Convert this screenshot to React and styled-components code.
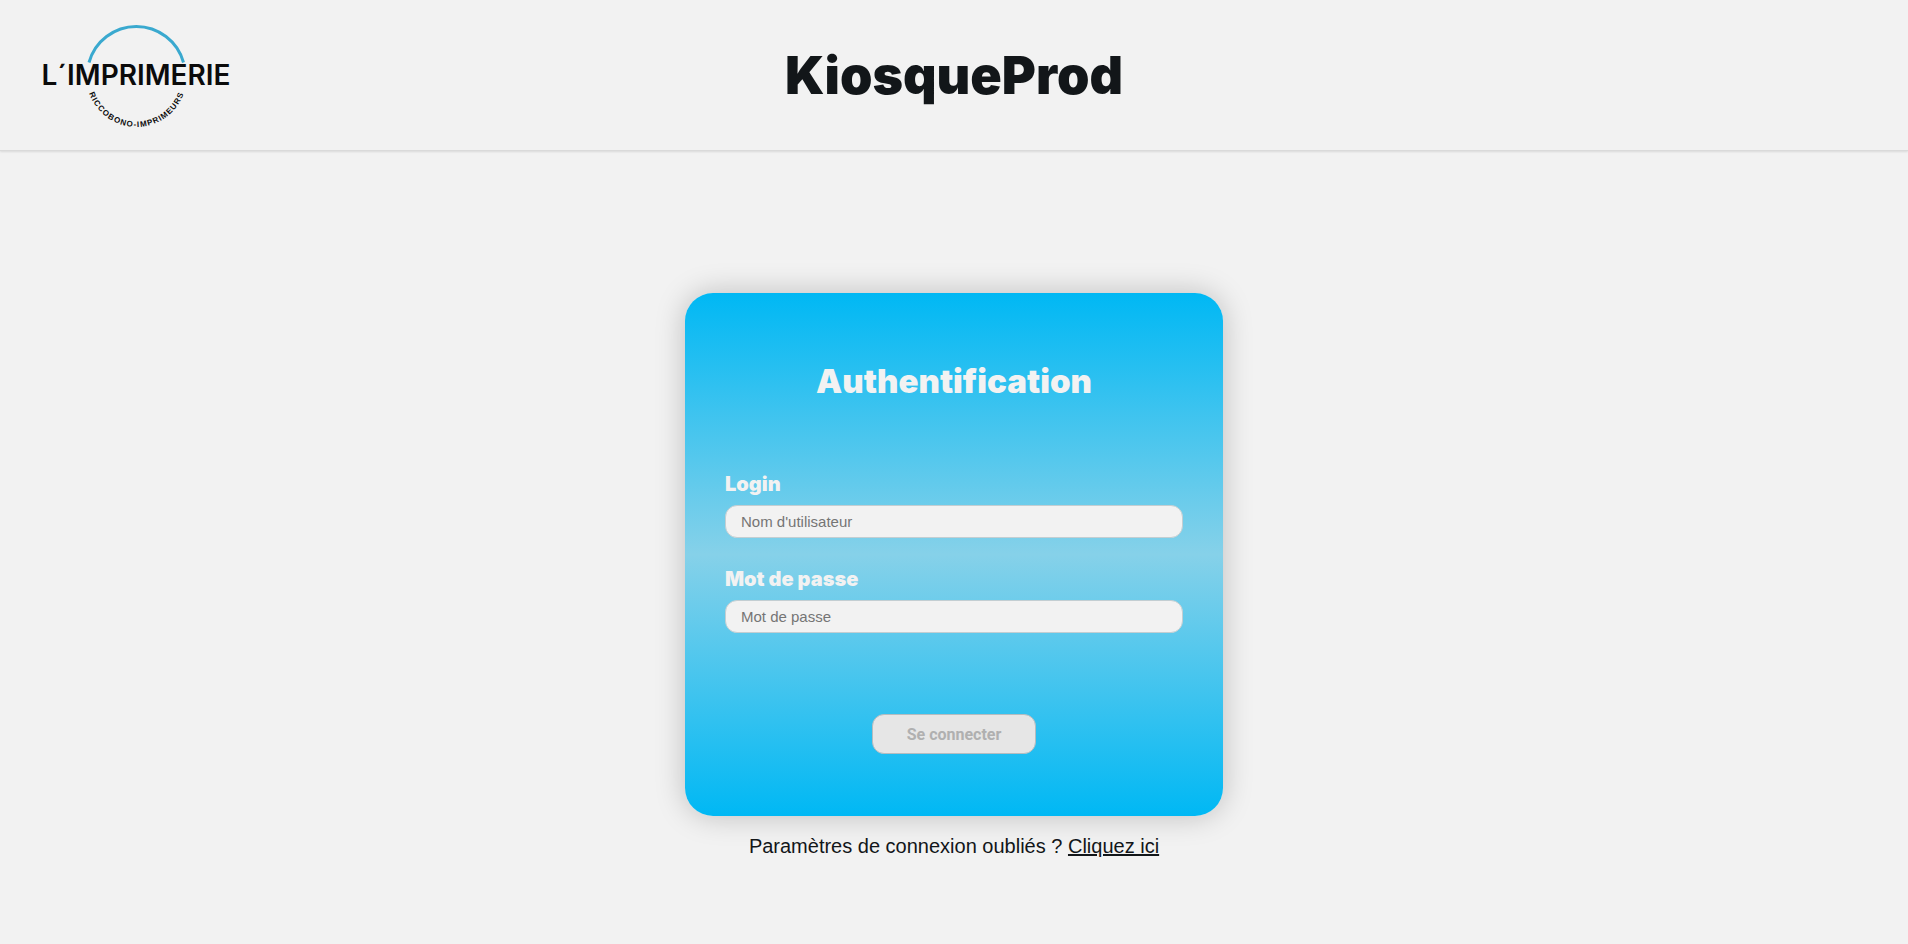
import React, { useState } from "react";
import styled, { createGlobalStyle } from "styled-components";

const GlobalStyle = createGlobalStyle`
  *, *::before, *::after { box-sizing: border-box; }
  body {
    margin: 0;
    background: #f2f2f2;
    color: #121619;
    font-family: "Liberation Sans", Arial, sans-serif;
  }
`;

const Header = styled.header`
  display: grid;
  grid-template-columns: 1fr auto 1fr;
  align-items: center;
  height: 151px;
  padding: 2px 40px 0;
  border-bottom: 1px solid #dadada;
  box-shadow: 0 1px 2px rgba(0, 0, 0, 0.1);
`;

const LogoLink = styled.a`
  justify-self: start;
  display: block;
  line-height: 0;
`;

const SiteTitle = styled.h1`
  margin: 0;
  font-family: "Arial Black", Inter, sans-serif;
  font-size: 52px;
  line-height: 60px;
  font-weight: 900;
`;

const Main = styled.main`
  display: flex;
  flex-direction: column;
  align-items: center;
  gap: 18px;
  padding: 142px 16px 72px;
`;

const Card = styled.form`
  display: flex;
  flex-direction: column;
  width: 100%;
  max-width: 538px;
  padding: 68px 40px 62px;
  border-radius: 28px;
  background: linear-gradient(#00b8f4, #86d1e9 50%, #00b8f4);
  box-shadow: 0 0 30px rgba(0, 0, 0, 0.22);
`;

const CardTitle = styled.h2`
  margin: 0 0 71px;
  color: #f2f2f2;
  font-family: "Arial Black", Inter, sans-serif;
  font-size: 33px;
  line-height: 40px;
  font-weight: 900;
  text-align: center;
`;

const Fields = styled.div`
  display: flex;
  flex-direction: column;
  gap: 29px;
  margin-bottom: 81px;
`;

const Field = styled.div`
  display: flex;
  flex-direction: column;
  gap: 9px;
`;

const Label = styled.label`
  align-self: flex-start;
  color: #f2f2f2;
  font-family: "Arial Black", Inter, sans-serif;
  font-size: 20px;
  line-height: 24px;
  font-weight: 900;
`;

const TextInput = styled.input`
  width: 100%;
  height: 33px;
  padding: 0 15px;
  border: 1px solid #c3ced2;
  border-radius: 12px;
  background: #f2f2f2;
  color: #121619;
  font-family: inherit;
  font-size: 15px;

  &::placeholder { color: #757575; }
`;

const SubmitButton = styled.button`
  align-self: center;
  height: 40px;
  padding: 0 34px;
  border: 1px solid #b4bcc0;
  border-radius: 12px;
  background: #e6e6e6;
  color: #121619;
  font-family: Roboto, sans-serif;
  font-size: 16px;
  font-weight: 700;

  &:disabled { color: #b0b0b0; }
`;

const Help = styled.p`
  margin: 0;
  font-size: 20px;
  line-height: 24px;
`;

const HelpLink = styled.a`
  color: inherit;
  text-decoration: underline;
`;

const LogoName = styled.text`
  font-family: Inter, sans-serif;
  font-size: 28px;
  font-weight: 600;
`;

const LogoTagline = styled.text`
  font-family: "Liberation Sans", Arial, sans-serif;
  font-size: 8px;
  font-weight: 700;
  letter-spacing: 1px;
`;

function Logo() {
  return (
    <svg width="194" height="106" viewBox="0 0 194 106" role="img" aria-label="L´Imprimerie Riccobono">
      <path d="M49 39.500A49 49 0 0 1 143.500 39.500" fill="none" stroke="#3aa9cf" strokeWidth="3" />
      <LogoName x="96" y="62" textAnchor="middle" fill="#0b0b0b">L´IMPRIMERIE</LogoName>
      <path id="tagline-arc" d="M47 61A50 50 0 0 0 146 61" fill="none" />
      <LogoTagline fill="#0b0b0b">
        <textPath href="#tagline-arc" startOffset="50%" textAnchor="middle">RICCOBONO-IMPRIMEURS</textPath>
      </LogoTagline>
    </svg>
  );
}

export default function App() {
  const [login, setLogin] = useState("");
  const [password, setPassword] = useState("");

  return (
    <>
      <GlobalStyle />
      <Header>
        <LogoLink href="#accueil"><Logo /></LogoLink>
        <SiteTitle>KiosqueProd</SiteTitle>
      </Header>
      <Main>
        <Card onSubmit={(event) => event.preventDefault()}>
          <CardTitle>Authentification</CardTitle>
          <Fields>
            <Field>
              <Label htmlFor="login">Login</Label>
              <TextInput id="login" type="text" placeholder="Nom d'utilisateur" value={login} onChange={(event) => setLogin(event.target.value)} />
            </Field>
            <Field>
              <Label htmlFor="password">Mot de passe</Label>
              <TextInput id="password" type="password" placeholder="Mot de passe" value={password} onChange={(event) => setPassword(event.target.value)} />
            </Field>
          </Fields>
          <SubmitButton type="submit" disabled={!login || !password}>Se connecter</SubmitButton>
        </Card>
        <Help>
          Paramètres de connexion oubliés ? <HelpLink href="#oubli">Cliquez ici</HelpLink>
        </Help>
      </Main>
    </>
  );
}
